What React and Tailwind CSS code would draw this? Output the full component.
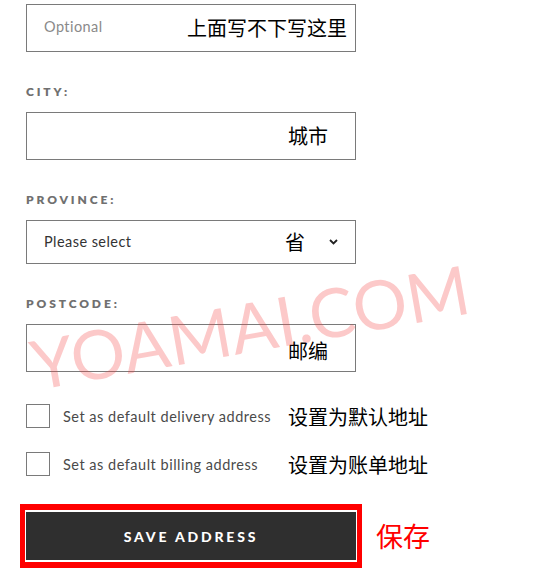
import React from 'react';

const latin = { fontFamily: 'Lato, "Noto Sans CJK SC", sans-serif' };

const Label = ({ children, className = '' }) => (
  <div className={`mt-[32px] mb-[12px] h-[16px] leading-[16px] text-[12px] font-extrabold tracking-[0.24em] text-[#707070] ${className}`}>
    {children}
  </div>
);

const Note = ({ children, className = '' }) => (
  <span className={`text-[20px] leading-none text-black font-['Noto_Sans_CJK_SC',sans-serif] ${className}`}>{children}</span>
);

const Chevron = () => (
  <svg width="9" height="6" viewBox="0 0 9 6" fill="none">
    <path d="M1 1l3.5 3.5L8 1" stroke="#222" strokeWidth="1.8" />
  </svg>
);

const Check = ({ label, note }) => (
  <label className="flex items-center h-[24px]">
    <span className="w-[24px] h-[24px] border border-[#7a7a7a] bg-white shrink-0" />
    <span className="ml-[13px] w-[212px] text-[14.5px] text-[#4a4a4a] tracking-[0.035em] mt-[2px]">{label}</span>
    <Note className="ml-[13px] mt-[2px]">{note}</Note>
  </label>
);

export default function App() {
  return (
    <div className="relative w-[541px] h-[583px] bg-white overflow-hidden" style={latin}>
      <div className="pt-[4px] pl-[26px]">
        <div className="w-[330px] h-[48px] border border-[#7a7a7a] flex items-center pl-[17px] pr-[8px]">
          <span className="text-[14.5px] text-[#8a8a8a] tracking-[0.03em] -mt-[2px]">Optional</span>
          <Note className="ml-auto">上面写不下写这里</Note>
        </div>

        <Label>CITY:</Label>
        <div className="w-[330px] h-[48px] border border-[#7a7a7a] flex items-center justify-end pr-[27px]">
          <Note>城市</Note>
        </div>

        <Label>PROVINCE:</Label>
        <div className="w-[330px] h-[44px] border border-[#7a7a7a] flex items-center pl-[17px]">
          <span className="text-[14.5px] text-[#333] tracking-[0.03em]">Please select</span>
          <Note className="ml-auto">省</Note>
          <span className="ml-[24px] mr-[17px] flex items-center"><Chevron /></span>
        </div>

        <Label>POSTCODE:</Label>
        <div className="w-[330px] h-[48px] border border-[#7a7a7a] flex items-center justify-end pr-[27px] pt-[6px]">
          <Note>邮编</Note>
        </div>

        <div className="mt-[32px] flex flex-col gap-[24px]">
          <Check label="Set as default delivery address" note="设置为默认地址" />
          <Check label="Set as default billing address" note="设置为账单地址" />
        </div>

        <div className="mt-[28px] -ml-[6px] flex items-center">
          <div className="border-x-[5px] border-y-[6px] border-[#ff0000] px-[1px] py-[2px]">
            <button className="w-[330px] h-[48px] bg-[#2f2f2f] text-white text-[14px] font-black tracking-[0.2em]">
              SAVE ADDRESS
            </button>
          </div>
          <span className="ml-[14px] text-[27px] text-[#ff0000] font-['Noto_Sans_CJK_SC',sans-serif]">保存</span>
        </div>
      </div>

      <div className="pointer-events-none absolute left-[250px] top-[326px] -translate-x-1/2 -translate-y-1/2 -rotate-10 whitespace-nowrap text-[68px] font-normal leading-none text-[rgba(245,60,60,0.28)]">
        YOAMAI.COM
      </div>
    </div>
  );
}
